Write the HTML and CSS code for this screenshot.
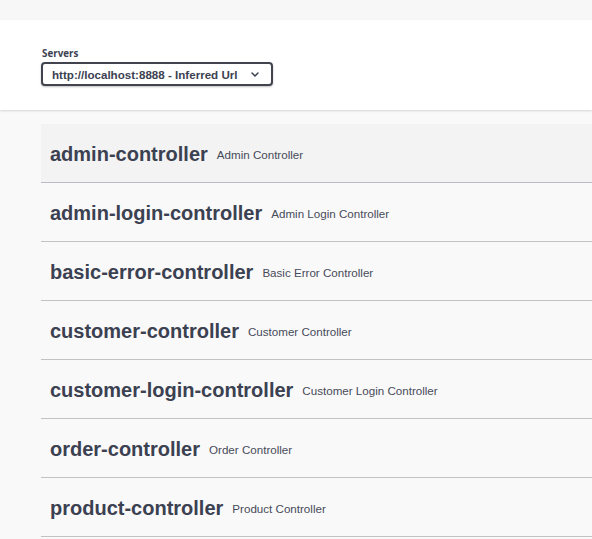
FILE: index.html
```html
<!DOCTYPE html>
<html>
<head>
<meta charset="utf-8">
<link rel="stylesheet" href="styles.css">
</head>
<body>
<div class="topbar"></div>
<section class="scheme">
  <div class="servers">
    <label class="servers-label">Servers</label>
    <div class="select">
      <span class="select-text">http://localhost:8888 - Inferred Url</span>
      <svg class="chevron" width="8" height="5" viewBox="0 0 8 5"><path d="M1 1 L4 4 L7 1" fill="none" stroke="#3b4151" stroke-width="1.5" stroke-linecap="round" stroke-linejoin="round"/></svg>
    </div>
  </div>
</section>
<main class="tags">
  <div class="tag active"><h3 class="tag-name">admin-controller</h3><small class="tag-desc">Admin Controller</small></div>
  <div class="tag"><h3 class="tag-name">admin-login-controller</h3><small class="tag-desc">Admin Login Controller</small></div>
  <div class="tag"><h3 class="tag-name">basic-error-controller</h3><small class="tag-desc">Basic Error Controller</small></div>
  <div class="tag"><h3 class="tag-name">customer-controller</h3><small class="tag-desc">Customer Controller</small></div>
  <div class="tag"><h3 class="tag-name">customer-login-controller</h3><small class="tag-desc">Customer Login Controller</small></div>
  <div class="tag"><h3 class="tag-name">order-controller</h3><small class="tag-desc">Order Controller</small></div>
  <div class="tag"><h3 class="tag-name">product-controller</h3><small class="tag-desc">Product Controller</small></div>
</main>
</body>
</html>
```
FILE: styles.css
```css
html, body {
  margin: 0;
  padding: 0;
  background: #faf9fa;
  font-family: "Liberation Sans", Arial, sans-serif;
  color: #3b4151;
  overflow: hidden;
}
.topbar {
  height: 20px;
  background: #f8f7f8;
}
.scheme {
  background: #fff;
  height: 90px;
  box-sizing: border-box;
  padding: 28px 0 0 41px;
  box-shadow: 0 1px 2px 0 rgba(0,0,0,0.15);
  position: relative;
}
.servers {
  display: flex;
  flex-direction: column;
  align-items: flex-start;
}
.servers-label {
  font-family: "Open Sans", "Liberation Sans", sans-serif;
  font-size: 9.8px;
  font-weight: 700;
  line-height: 12px;
  margin-left: 1px;
  margin-bottom: 2px;
}
.select {
  width: 232px;
  height: 24px;
  box-sizing: border-box;
  border: 2px solid #41444e;
  border-radius: 4px;
  box-shadow: 0 1px 2px 0 rgba(0,0,0,0.25);
  display: flex;
  align-items: center;
  padding-left: 9px;
  padding-right: 12px;
  background: #fff;
}
.select-text {
  font-size: 11.6px;
  font-weight: 700;
  flex: 1;
  white-space: nowrap;
}
.chevron {
  display: block;
}
.tags {
  margin: 14px 0 0 41px;
}
.tag {
  display: flex;
  align-items: center;
  height: 56px;
  padding-top: 2px;
  border-bottom: 1px solid rgba(59,65,81,0.3);
  padding-left: 9px;
}
.tag.active {
  background: #f3f3f4;
}
.tag-name {
  margin: 0;
  font-size: 20px;
  font-weight: 700;
  line-height: 24px;
}
.tag-desc {
  margin-left: 9px;
  font-size: 11.6px;
  line-height: 14px;
  margin-top: 1px;
  color: #464b59;
}
```
